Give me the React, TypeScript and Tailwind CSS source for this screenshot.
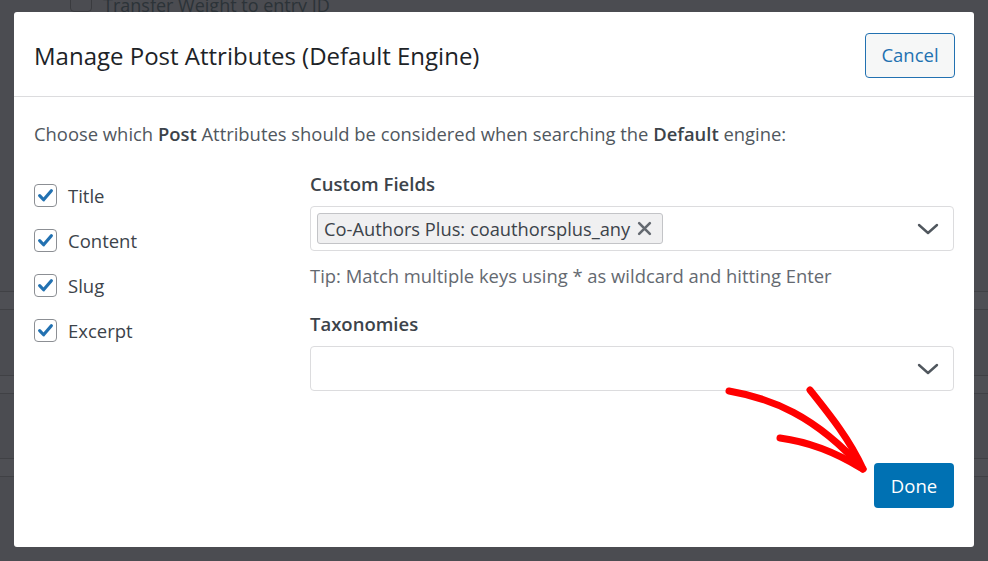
import React from 'react';

const font = { fontFamily: '"Open Sans", "Noto Sans", sans-serif' };

function Check() {
  return (
    <span className="flex h-[23px] w-[23px] items-center justify-center rounded-[4px] border border-[#8c8f94] bg-white">
      <svg width="17" height="17" viewBox="0 0 16 16">
        <path d="M2.5 8.2 L6.2 12 L13.5 3.5" fill="none" stroke="#2271b1" strokeWidth="3" strokeLinecap="round" strokeLinejoin="round" />
      </svg>
    </span>
  );
}

function Chevron() {
  return (
    <svg width="22" height="14" viewBox="0 0 22 14" className="shrink-0">
      <path d="M2 3 L11 11 L20 3" fill="none" stroke="#50575e" strokeWidth="2.4" strokeLinecap="round" strokeLinejoin="round" />
    </svg>
  );
}

export default function App() {
  const attrs = ['Title', 'Content', 'Slug', 'Excerpt'];

  return (
    <div className="relative h-[561px] w-[988px] overflow-hidden bg-[#4b4c51]" style={font}>
      {/* page behind the backdrop */}
      <div className="flex h-[14px] items-start gap-[11px] pl-[70px]">
        <span className="-mt-[10px] h-[22px] w-[22px] rounded-[4px] border border-[#3a3b3f]" />
        <span className="-mt-[4px] text-[18px] leading-none text-[#2c3338]">Transfer Weight to entry ID</span>
      </div>
      <div className="mt-[277px] flex flex-col">
        <div className="h-[19px] border-y border-[#404145] bg-[#4e4f54]" />
        <div className="h-[65px]" />
        <div className="h-[19px] border-y border-[#404145] bg-[#4e4f54]" />
        <div className="h-[64px]" />
        <div className="h-[19px] border-y border-[#404145] bg-[#4e4f54]" />
      </div>

      {/* modal */}
      <div className="absolute left-[14px] top-[12px] flex h-[535px] w-[960px] flex-col rounded-[3px] bg-white">
        <div className="flex h-[85px] items-center justify-between border-b border-[#dcdcde] pl-[20px] pr-[19px]">
          <h1 className="mt-[3px] text-[24px] font-normal leading-[30px] text-[#1d2327]">Manage Post Attributes (Default Engine)</h1>
          <button className="mt-[2px] h-[45px] w-[90px] rounded-[4px] border border-[#2271b1] bg-[#f6f7f7] text-[18.5px] text-[#2271b1]">
            Cancel
          </button>
        </div>

        <div className="flex flex-1 flex-col px-[20px] pt-[24px]">
          <p className="text-[18.4px] leading-[26px] text-[#50575e]">
            Choose which <b className="font-semibold text-[#3c434a]">Post</b> Attributes should be considered when searching the{' '}
            <b className="font-semibold text-[#3c434a]">Default</b> engine:
          </p>

          <div className="mt-[22px] flex">
            <div className="flex w-[276px] flex-col gap-[22px] pt-[15px]">
              {attrs.map((a) => (
                <label key={a} className="flex items-center gap-[11px] text-[18.5px] leading-[23px] text-[#3c434a]">
                  <Check />
                  {a}
                </label>
              ))}
            </div>

            <div className="flex flex-1 flex-col pt-[3px]">
              <div className="text-[18.5px] font-semibold leading-[24px] text-[#3c434a]">Custom Fields</div>
              <div className="mt-[10px] flex h-[45px] items-center justify-between rounded-[4px] border border-[#dcdcde] pl-[6px] pr-[14px]">
                <span className="flex h-[31px] items-center gap-[7px] rounded-[3px] border border-[#c3c4c7] bg-[#f0f0f1] pl-[6px] pr-[10px] text-[18.3px] text-[#3c434a]">
                  Co-Authors Plus: coauthorsplus_any
                  <svg width="15" height="15" viewBox="0 0 14 14">
                    <path d="M2 2 L12 12 M12 2 L2 12" stroke="#646970" strokeWidth="2.4" strokeLinecap="round" />
                  </svg>
                </span>
                <Chevron />
              </div>
              <div className="mt-[13px] text-[18.4px] leading-[24px] text-[#646970]">
                Tip: Match multiple keys using * as wildcard and hitting Enter
              </div>

              <div className="mt-[24px] text-[18.5px] font-semibold leading-[24px] text-[#3c434a]">Taxonomies</div>
              <div className="mt-[10px] flex h-[45px] items-center justify-end rounded-[4px] border border-[#dcdcde] pr-[14px]">
                <Chevron />
              </div>
            </div>
          </div>

          <div className="mt-auto flex justify-end pb-[39px]">
            <button className="h-[45px] w-[80px] rounded-[4px] bg-[#0071b3] text-[18.5px] text-white">Done</button>
          </div>
        </div>
      </div>

      {/* red hand-drawn arrow annotation */}
      <svg className="pointer-events-none absolute left-[720px] top-[380px]" width="160" height="100" viewBox="0 0 160 100">
        <path d="M9 11 C50 18 95 35 143 89" fill="none" stroke="#ff0000" strokeWidth="7" strokeLinecap="round" />
        <path d="M90 10 C110 35 130 60 143 89" fill="none" stroke="#ff0000" strokeWidth="7" strokeLinecap="round" />
        <path d="M60 58 C90 62 115 72 141 88" fill="none" stroke="#ff0000" strokeWidth="7" strokeLinecap="round" />
      </svg>
    </div>
  );
}
